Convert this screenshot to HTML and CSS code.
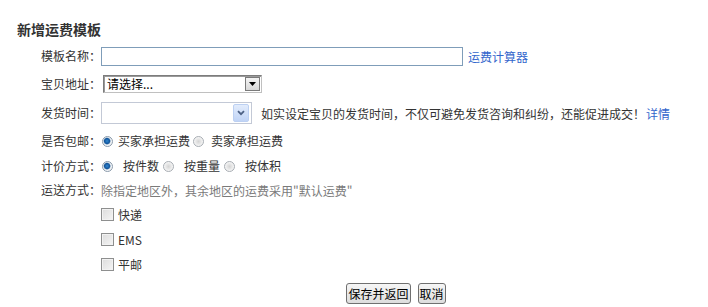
FILE: index.html
```html
<!DOCTYPE html>
<html lang="zh-CN">
<head>
<meta charset="utf-8">
<title>新增运费模板</title>
<link rel="stylesheet" href="styles.css">
</head>
<body>
<div class="page">
  <h2 class="title">新增运费模板</h2>
  <div class="form">
    <div class="row r1">
      <span class="label">模板名称：</span>
      <input class="text-input" type="text">
      <a class="link calc" href="#">运费计算器</a>
    </div>
    <div class="row r2">
      <span class="label">宝贝地址：</span>
      <div class="sel-classic">
        <span class="sel-text">请选择...</span>
        <span class="sel-btn"><svg width="7" height="4" viewBox="0 0 7 4"><path d="M0 0H7L3.5 4Z" fill="#000"/></svg></span>
      </div>
    </div>
    <div class="row r3">
      <span class="label">发货时间：</span>
      <div class="sel-modern">
        <span class="sel-text"></span>
        <span class="sel-btn2"><svg width="8" height="6" viewBox="0 0 8 6"><path d="M1 1.2L4 4.2L7 1.2" fill="none" stroke="#4d6185" stroke-width="1.8"/></svg></span>
      </div>
      <span class="hint">如实设定宝贝的发货时间，不仅可避免发货咨询和纠纷，还能促进成交！</span>
      <a class="link detail" href="#">详情</a>
    </div>
    <div class="row r4">
      <span class="label">是否包邮：</span>
      <span class="radio on"></span><span class="opt o1">买家承担运费</span>
      <span class="radio r-b"></span><span class="opt o2">卖家承担运费</span>
    </div>
    <div class="row r5">
      <span class="label">计价方式：</span>
      <span class="radio on"></span><span class="opt p1">按件数</span>
      <span class="radio p-r"></span><span class="opt p2">按重量</span>
      <span class="radio p-r"></span><span class="opt p2">按体积</span>
    </div>
    <div class="row r6">
      <span class="label">运送方式：</span>
      <span class="muted">除指定地区外，其余地区的运费采用"默认运费"</span>
    </div>
    <div class="row chk-row"><span class="checkbox"></span><span class="chk-text">快递</span></div>
    <div class="row chk-row"><span class="checkbox"></span><span class="chk-text">EMS</span></div>
    <div class="row chk-row"><span class="checkbox"></span><span class="chk-text">平邮</span></div>
    <div class="actions">
      <button class="btn" type="button">保存并返回</button>
      <button class="btn" type="button">取消</button>
    </div>
  </div>
</div>
</body>
</html>
```

FILE: styles.css
```css
* { box-sizing: border-box; }
html, body { margin: 0; padding: 0; background: #fff; }
body {
  font-family: "Noto Sans CJK SC", "Liberation Sans", sans-serif;
  font-size: 12px;
  color: #333;
}
.page { padding-left: 17px; width: 708px; }
.title {
  margin: 21px 0 0 0;
  font-size: 14px;
  line-height: 16px;
  height: 16px;
  font-weight: bold;
  color: #333;
}
.form { padding-left: 24px; margin-top: 5px; }
.row { display: flex; align-items: center; white-space: nowrap; }
.r1 { height: 28px; }
.r2 { height: 28px; }
.r3 { height: 30px; }
.r4 { height: 26px; }
.r5 { height: 24px; }
.r6 { height: 24px; }
.chk-row { height: 25px; padding-left: 60px; }
.label { width: 60px; flex: none; line-height: 16px; }
.link { color: #3366cc; text-decoration: none; }
.text-input {
  width: 362px; height: 19px; margin: 0;
  border: 1px solid #7f9db9; padding: 0; font: inherit;
}
.calc { margin-left: 5px; }
.sel-classic {
  margin-left: 2px;
  width: 159px; height: 18px;
  border: 1px solid #7c7c7c;
  border-right-color: #c0c0c0; border-bottom-color: #c0c0c0;
  box-shadow: inset 1px 1px 0 #9a9a9a;
  display: flex; align-items: center;
  color: #000;
}
.sel-classic .sel-text { flex: 1; padding-left: 3px; line-height: 14px; }
.sel-btn {
  width: 15px; height: 14px; margin-right: 1px;
  border: 1px solid #7a7a7a;
  background: linear-gradient(#f4f4f4, #d8d8d8);
  display: flex; align-items: center; justify-content: center;
}
.sel-modern {
  width: 151px; height: 22px;
  border: 1px solid #c3c9d6;
  display: flex; align-items: center;
}
.sel-modern .sel-text { flex: 1; }
.sel-btn2 {
  width: 16px; height: 18px; margin-right: 2px;
  border: 1px solid #bcd0f2;
  border-radius: 2px;
  background: linear-gradient(#e2ecfc, #c0d4f6);
  display: flex; align-items: center; justify-content: center;
}
.hint { margin-left: 9px; }
.detail { margin-left: 1px; }
.radio {
  flex: none;
  width: 11px; height: 11px; border-radius: 50%;
  margin-left: 1px;
  border: 1px solid #a8adb3;
  background: radial-gradient(circle at 50% 50%, #d4d4d4 0, #eaeaea 3px, #fafafa 5px);
}
.radio.on {
  border-color: #8a9aab;
  background: radial-gradient(circle at 45% 45%, #2f86cf 0, #14569c 2.6px, #6d95bb 3.2px, #e9eef3 3.8px, #f7f7f7 5px);
}
.opt { line-height: 16px; }
.o1 { margin-left: 5px; }
.r-b { margin-left: 3px; }
.o2 { margin-left: 7px; }
.p1 { margin-left: 10px; }
.p-r { margin-left: 4px; }
.p2 { margin-left: 10px; }
.muted { color: #7a7a7a; }
.checkbox {
  flex: none;
  width: 13px; height: 13px;
  border: 1px solid #8e8f8f;
  background: linear-gradient(135deg, #dcdcdc, #f5f5f5);
  box-shadow: inset 0 0 0 1px #f2f2f2;
}
.chk-text { margin-left: 4px; line-height: 16px; color: #333; }
.actions {
  margin-left: 60px; width: 590px;
  margin-top: 6px;
  display: flex; justify-content: center; gap: 7px;
}
.btn {
  height: 21px; margin: 0;
  padding: 0 1px;
  font-family: "Noto Sans CJK SC", sans-serif;
  font-size: 12px; line-height: 17px;
  color: #000;
  border: 1px solid #707070;
  border-radius: 3px;
  background: linear-gradient(#f6f6f6, #dddddd);
}
```
